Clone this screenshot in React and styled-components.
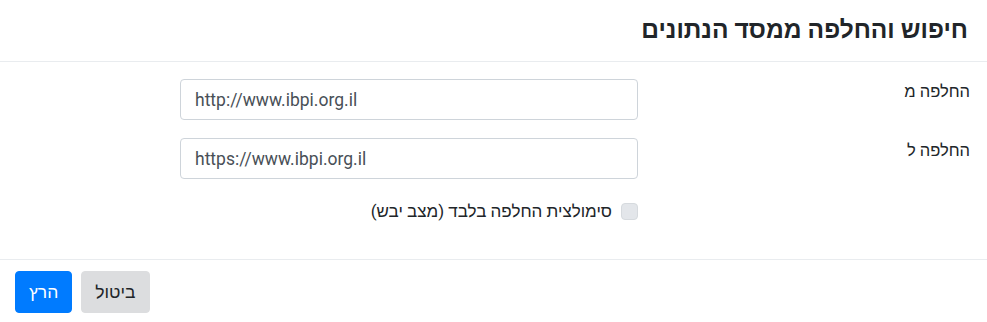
import React from 'react';
import styled, { createGlobalStyle } from 'styled-components';

const GlobalStyle = createGlobalStyle`
  html, body {
    margin: 0;
    padding: 0;
    background: #fff;
  }
  body {
    font-family: Roboto, "Liberation Sans", "DejaVu Sans", sans-serif;
    color: #212529;
  }
`;

const Modal = styled.div`
  direction: rtl;
  width: 987px;
  height: 322px;
  background: #fff;
  display: flex;
  flex-direction: column;
  box-sizing: border-box;
`;

const Header = styled.div`
  height: 61px;
  padding: 0 19px;
  display: flex;
  align-items: center;
  border-bottom: 1px solid #e9ecef;
`;

const Title = styled.h5`
  margin: 0;
  font-size: 24.5px;
  font-weight: 700;
  line-height: 1.5;
  color: #212529;
`;

const Body = styled.div`
  flex: 1;
  padding: 17px 17px 0;
  display: flex;
  flex-direction: column;
  gap: 18px;
`;

const Row = styled.div`
  display: grid;
  grid-template-columns: 332px 458px;
  align-items: start;
`;

const Label = styled.label`
  font-size: 16.5px;
  line-height: 24px;
  padding-top: 1px;
  color: #212529;
`;

const Input = styled.input`
  direction: ltr;
  box-sizing: border-box;
  width: 458px;
  height: 41px;
  padding: 0 14px;
  font-family: Roboto, "Liberation Sans", sans-serif;
  font-size: 17.5px;
  color: #495057;
  border: 1px solid #ced4da;
  border-radius: 4px;
  background: #fff;
  outline: none;
`;

const CheckRow = styled.div`
  grid-column: 2;
  display: flex;
  align-items: center;
  gap: 9px;
  margin-top: 2px;
  font-size: 17px;
  line-height: 24px;
`;

const CheckBox = styled.span`
  width: 17px;
  height: 17px;
  box-sizing: border-box;
  border-radius: 4px;
  background: #e3e6ea;
  border: 1px solid #d6dade;
  flex-shrink: 0;
`;

const Footer = styled.div`
  height: 63px;
  box-sizing: border-box;
  border-top: 1px solid #e9ecef;
  padding: 11px 15px 0;
  display: flex;
  justify-content: flex-end;
  align-items: flex-start;
  gap: 9px;
`;

const Button = styled.button`
  height: 42px;
  padding: 0 13px;
  font-family: Roboto, "Liberation Sans", sans-serif;
  font-size: 17.5px;
  border-radius: 4px;
  border: 1px solid ${({ $primary }) => ($primary ? '#007bff' : '#dcdddf')};
  background: ${({ $primary }) => ($primary ? '#007bff' : '#dcdddf')};
  color: ${({ $primary }) => ($primary ? '#fff' : '#212529')};
  cursor: pointer;
`;

export default function App() {
  return (
    <>
      <GlobalStyle />
      <Modal>
        <Header>
          <Title>חיפוש והחלפה ממסד הנתונים</Title>
        </Header>
        <Body>
          <Row>
            <Label>החלפה מ</Label>
            <Input defaultValue="http://www.ibpi.org.il" />
          </Row>
          <Row>
            <Label>החלפה ל</Label>
            <Input defaultValue="https://www.ibpi.org.il" />
          </Row>
          <Row>
            <CheckRow>
              <CheckBox />
              <span>סימולצית החלפה בלבד (מצב יבש)</span>
            </CheckRow>
          </Row>
        </Body>
        <Footer>
          <Button>ביטול</Button>
          <Button $primary>הרץ</Button>
        </Footer>
      </Modal>
    </>
  );
}
